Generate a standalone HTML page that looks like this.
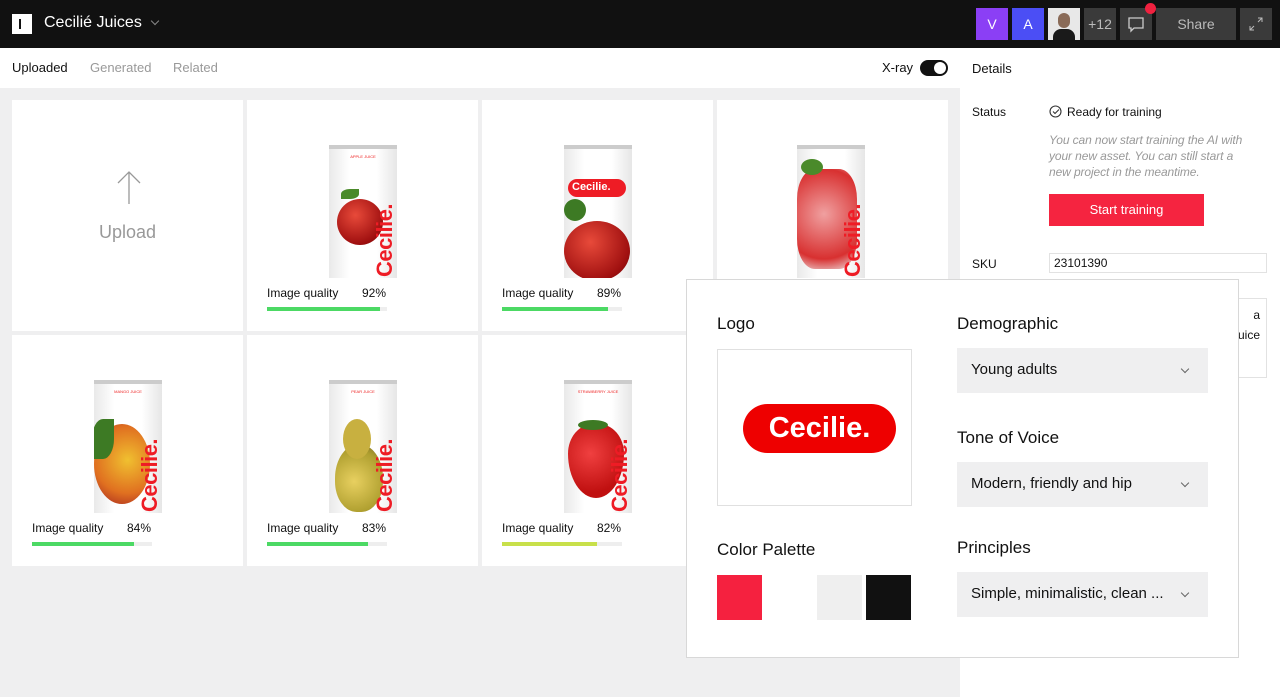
<!DOCTYPE html>
<html><head><meta charset="utf-8"><style>
*{box-sizing:border-box;margin:0;padding:0}
body{width:1280px;height:697px;overflow:hidden;font-family:"Liberation Sans",sans-serif;background:#efeff0;position:relative;color:#111}
.top{position:absolute;left:0;top:0;width:1280px;height:48px;background:#111}
.abs{position:absolute}
.tabs{position:absolute;left:0;top:48px;width:960px;height:40px;background:#fff}
.right{position:absolute;left:960px;top:48px;width:320px;height:649px;background:#fff}
.card{position:absolute;width:231px;height:231px;background:#fff}
.can{position:absolute;width:68px;height:133px;background:linear-gradient(90deg,#e9e9e9,#fff 30%,#fff 70%,#e6e6e6);border-top:4px solid #ccc;overflow:hidden}
.can .lbl{position:absolute;top:5px;width:100%;text-align:center;font-size:4px;color:#e22}
.can .brand{position:absolute;transform:rotate(-90deg);transform-origin:left top;color:#ee1c25;font-weight:bold;font-size:22px;white-space:nowrap;left:44px;top:128px;letter-spacing:-0.5px;line-height:24px}
.can .fruit{position:absolute;border-radius:50%}
.q{position:absolute;font-size:12px;color:#111}
.bar{position:absolute;height:4px;width:120px;background:#eee}
.bar i{display:block;height:4px;background:#4cd964}
.pop{position:absolute;left:686px;top:279px;width:553px;height:379px;background:#fff;border:1px solid #d8d8d8}
.sel{position:absolute;width:251px;height:45px;background:#efeff0;font-size:15px;padding:13px 14px;color:#111}
.sel:after{content:"";position:absolute;right:20px;top:18px;width:5px;height:5px;border-right:1.2px solid #666;border-bottom:1.2px solid #666;transform:rotate(45deg)}
.h{position:absolute;font-size:17px;color:#111}
</style></head><body>
<div class="top">
 <div class="abs" style="left:12px;top:14px;width:20px;height:20px;background:#fff"><div class="abs" style="left:7px;top:5px;width:2px;height:10px;background:#111"></div></div>
 <div class="abs" style="left:44px;top:14px;color:#fff;font-size:16px">Cecilié Juices</div>
 <div class="abs" style="left:152px;top:18px;width:6px;height:6px;border-right:1px solid #888;border-bottom:1px solid #888;transform:rotate(45deg)"></div>
 <div class="abs" style="left:976px;top:8px;width:32px;height:32px;background:#8b3ff5;color:#fff;font-size:14px;text-align:center;line-height:32px">V</div>
 <div class="abs" style="left:1012px;top:8px;width:32px;height:32px;background:#4b4ef5;color:#fff;font-size:14px;text-align:center;line-height:32px">A</div>
 <div class="abs" style="left:1048px;top:8px;width:32px;height:32px;background:#e8e8e8;overflow:hidden"><div class="abs" style="left:10px;top:5px;width:12px;height:15px;border-radius:6px;background:#8a6b58"></div><div class="abs" style="left:5px;top:21px;width:22px;height:14px;border-radius:8px 8px 0 0;background:#1a1a1a"></div></div>
 <div class="abs" style="left:1084px;top:8px;width:32px;height:32px;background:#3a3a3a;color:#bbb;font-size:14px;text-align:center;line-height:32px">+12</div>
 <div class="abs" style="left:1120px;top:8px;width:32px;height:32px;background:#3a3a3a">
  <svg width="32" height="32"><path d="M9 10h14v10h-9l-3 3v-3h-2z" fill="none" stroke="#ccc" stroke-width="1.3"/></svg></div>
 <div class="abs" style="left:1145px;top:3px;width:11px;height:11px;border-radius:50%;background:#f0213f"></div>
 <div class="abs" style="left:1156px;top:8px;width:80px;height:32px;background:#3a3a3a;color:#bbb;font-size:14px;text-align:center;line-height:32px">Share</div>
 <div class="abs" style="left:1240px;top:8px;width:32px;height:32px;background:#3a3a3a"><svg width="32" height="32"><path d="M18 10h4v4M22 10l-4 4M10 22l4-4M10 18v4h4" fill="none" stroke="#bbb" stroke-width="1"/></svg></div>
</div>
<div class="tabs">
 <div class="abs" style="left:12px;top:12px;font-size:13px;color:#111">Uploaded</div>
 <div class="abs" style="left:90px;top:12px;font-size:13px;color:#999">Generated</div>
 <div class="abs" style="left:173px;top:12px;font-size:13px;color:#999">Related</div>
 <div class="abs" style="left:882px;top:12px;font-size:13px">X-ray</div>
 <div class="abs" style="left:920px;top:12px;width:28px;height:16px;border-radius:8px;background:#111"><div class="abs" style="left:14px;top:2px;width:12px;height:12px;border-radius:50%;background:#fff"></div></div>
</div>
<div class="right">
 <div class="abs" style="left:12px;top:13px;font-size:13px">Details</div>
 <div class="abs" style="left:12px;top:57px;font-size:12px">Status</div>
 <svg class="abs" style="left:89px;top:57px" width="13" height="13"><circle cx="6.5" cy="6.5" r="5.5" fill="none" stroke="#333" stroke-width="1.1"/><path d="M4 6.5l2 2 4-4" fill="none" stroke="#333" stroke-width="1.1"/></svg>
 <div class="abs" style="left:107px;top:57px;font-size:12px">Ready for training</div>
 <div class="abs" style="left:89px;top:84px;width:208px;font-size:12px;font-style:italic;color:#999;line-height:16px;letter-spacing:-0.1px">You can now start training the AI with your new asset. You can still start a new project in the meantime.</div>
 <div class="abs" style="left:89px;top:146px;width:155px;height:32px;background:#f52440;color:#fff;font-size:13px;text-align:center;line-height:32px">Start training</div>
 <div class="abs" style="left:12px;top:209px;font-size:12px">SKU</div>
 <div class="abs" style="left:89px;top:205px;width:218px;height:20px;border:1px solid #e2e2e2;font-size:12px;padding:2px 4px">23101390</div>
 <div class="abs" style="left:89px;top:250px;width:218px;height:80px;border:1px solid #e2e2e2;font-size:12px;padding:6px;text-align:right;line-height:20px">a<br>uice</div>
</div>

<div class="card" style="left:12px;top:100px">
 <svg class="abs" style="left:104px;top:70px" width="26" height="34"><path d="M13 2v32M2 13L13 2l11 11" fill="none" stroke="#999" stroke-width="1.3"/></svg>
 <div class="abs" style="left:0;top:122px;width:231px;text-align:center;font-size:18px;color:#999">Upload</div>
</div>

<div class="card" style="left:247px;top:100px">
 <div class="can" style="left:82px;top:45px"><div class="lbl">APPLE JUICE</div><div class="fruit" style="left:8px;top:50px;width:46px;height:46px;background:radial-gradient(circle at 40% 35%,#e84a3a,#a01010 70%,#600)"></div><div class="fruit" style="left:12px;top:40px;width:18px;height:10px;background:#4a8a2a;border-radius:50% 0"></div><div class="brand">Cecilie.</div></div>
 <div class="q" style="left:20px;top:186px">Image quality</div><div class="q" style="left:115px;top:186px">92%</div>
 <div class="bar" style="left:20px;top:207px"><i style="width:113px"></i></div>
</div>
<div class="card" style="left:482px;top:100px">
 <div class="can" style="left:82px;top:45px"><div class="fruit" style="left:4px;top:30px;width:58px;height:18px;background:#ee1c25;border-radius:9px"></div><div class="abs" style="left:8px;top:32px;color:#fff;font-weight:bold;font-size:11px">Cecilie.</div><div class="fruit" style="left:0;top:72px;width:66px;height:60px;background:radial-gradient(circle at 40% 35%,#e84a3a,#a01010 70%,#600)"></div><div class="fruit" style="left:0;top:50px;width:22px;height:22px;background:#3d7a24"></div></div>
 <div class="q" style="left:20px;top:186px">Image quality</div><div class="q" style="left:115px;top:186px">89%</div>
 <div class="bar" style="left:20px;top:207px"><i style="width:106px"></i></div>
</div>
<div class="card" style="left:717px;top:100px">
 <div class="can" style="left:80px;top:45px"><div class="fruit" style="left:0;top:20px;width:60px;height:100px;border-radius:30%;background:radial-gradient(circle at 45% 45%,#f0a0a0,#d83030 70%,#eee)"></div><div class="fruit" style="left:4px;top:10px;width:22px;height:16px;background:#4a8a2a"></div><div class="brand">Cecilie.</div></div>
</div>
<div class="card" style="left:12px;top:335px">
 <div class="can" style="left:82px;top:45px"><div class="lbl">MANGO JUICE</div><div class="fruit" style="left:0;top:40px;width:56px;height:80px;background:radial-gradient(circle at 60% 45%,#f0c030,#e07020 60%,#a02020)"></div><div class="fruit" style="left:-2px;top:35px;width:22px;height:40px;background:#3d7a24;border-radius:50% 0"></div><div class="brand">Cecilie.</div></div>
 <div class="q" style="left:20px;top:186px">Image quality</div><div class="q" style="left:115px;top:186px">84%</div>
 <div class="bar" style="left:20px;top:207px"><i style="width:102px"></i></div>
</div>
<div class="card" style="left:247px;top:335px">
 <div class="can" style="left:82px;top:45px"><div class="lbl">PEAR JUICE</div><div class="fruit" style="left:6px;top:60px;width:48px;height:68px;border-radius:50% 50% 45% 45%;background:radial-gradient(circle at 40% 55%,#e8d060,#b0a030 65%,#706020)"></div><div class="fruit" style="left:14px;top:35px;width:28px;height:40px;background:#c8b040"></div><div class="brand">Cecilie.</div></div>
 <div class="q" style="left:20px;top:186px">Image quality</div><div class="q" style="left:115px;top:186px">83%</div>
 <div class="bar" style="left:20px;top:207px"><i style="width:101px"></i></div>
</div>
<div class="card" style="left:482px;top:335px">
 <div class="can" style="left:82px;top:45px"><div class="lbl">STRAWBERRY JUICE</div><div class="fruit" style="left:4px;top:40px;width:56px;height:74px;border-radius:45% 45% 50% 50%/40% 40% 60% 60%;background:radial-gradient(circle at 40% 40%,#f04040,#c01010 70%)"></div><div class="fruit" style="left:14px;top:36px;width:30px;height:10px;background:#3d7a24"></div><div class="brand">Cecilie.</div></div>
 <div class="q" style="left:20px;top:186px">Image quality</div><div class="q" style="left:115px;top:186px">82%</div>
 <div class="bar" style="left:20px;top:207px"><i style="width:95px;background:#c8e04a"></i></div>
</div>

<div class="pop">
 <div class="h" style="left:30px;top:34px">Logo</div>
 <div class="abs" style="left:30px;top:69px;width:195px;height:157px;border:1px solid #e0e0e0">
  <div class="abs" style="left:25px;top:54px;width:153px;height:49px;border-radius:25px;background:#ee0000;color:#fff;font-weight:bold;font-size:29px;text-align:center;line-height:49px">Cecilie.</div>
 </div>
 <div class="h" style="left:30px;top:260px">Color Palette</div>
 <div class="abs" style="left:30px;top:295px;width:45px;height:45px;background:#f5213f"></div>
 <div class="abs" style="left:130px;top:295px;width:45px;height:45px;background:#efefef"></div>
 <div class="abs" style="left:179px;top:295px;width:45px;height:45px;background:#111"></div>
 <div class="h" style="left:270px;top:34px">Demographic</div>
 <div class="sel" style="left:270px;top:68px">Young adults</div>
 <div class="h" style="left:270px;top:148px">Tone of Voice</div>
 <div class="sel" style="left:270px;top:182px">Modern, friendly and hip</div>
 <div class="h" style="left:270px;top:258px">Principles</div>
 <div class="sel" style="left:270px;top:292px">Simple, minimalistic, clean ...</div>
</div>
</body></html>
